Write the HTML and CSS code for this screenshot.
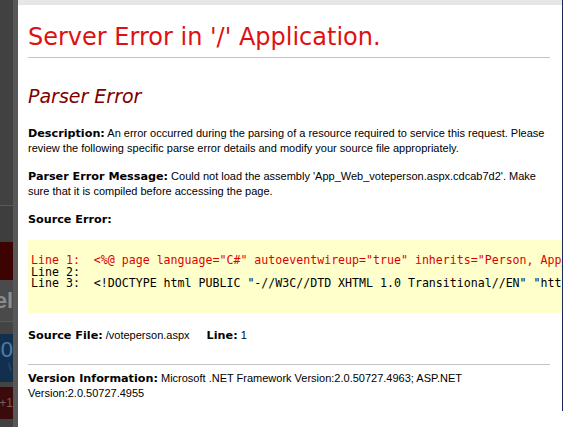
FILE: index.html
```html
<!DOCTYPE html>
<html lang="en">
<head>
    <meta charset="UTF-8">
    <title>Server Error in '/' Application.</title>
    <link rel="stylesheet" href="styles.css">
</head>
<body>
    <div class="backdrop">
        <div class="bd-space"></div>
        <div class="bd-rule"></div>
        <div class="bd-gap"></div>
        <div class="bd-red"></div>
        <div class="bd-label"><span>Panel</span></div>
        <div class="bd-rule"></div>
        <div class="bd-gap small"></div>
        <div class="bd-blue"><span>150</span><i>\</i></div>
        <div class="bd-gap tiny"></div>
        <div class="bd-plus"><span>+1</span></div>
    </div>
    <div class="dialog">
        <div class="dialog-frame">
            <div class="dialog-top"></div>
            <div class="error-page">
                <h1>Server Error in '/' Application.</h1>
                <hr>
                <h2><i>Parser Error</i></h2>
                <p><b>Description:</b> An error occurred during the parsing of a resource required to service this request. Please review the following specific parse error details and modify your source file appropriately.</p>
                <p><b>Parser Error Message:</b> Could not load the assembly 'App_Web_voteperson.aspx.cdcab7d2'. Make sure that it is compiled before accessing the page.</p>
                <p><b>Source Error:</b></p>
                <div class="source-box">
<pre><span class="err-line">Line 1:  &lt;%@ page language="C#" autoeventwireup="true" inherits="Person, App_Web_voteperson.aspx.cdcab7d2" %&gt;</span>
Line 2:  
Line 3:  &lt;!DOCTYPE html PUBLIC "-//W3C//DTD XHTML 1.0 Transitional//EN" "http://www.w3.org/TR/xhtml1/DTD/xhtml1-transitional.dtd"&gt;</pre>
                </div>
                <p class="source-file"><b>Source File:</b> /voteperson.aspx <b class="line-no">Line:</b> 1</p>
                <hr class="bottom-rule">
                <p class="version"><b>Version Information:</b> Microsoft .NET Framework Version:2.0.50727.4963; ASP.NET Version:2.0.50727.4955</p>
            </div>
        </div>
    </div>
</body>
</html>
```

FILE: styles.css
```css
html, body {
    margin: 0;
    padding: 0;
    height: 100%;
}
body {
    display: flex;
    background-color: #414141;
    overflow: hidden;
}
.backdrop {
    width: 13px;
    flex: none;
    display: flex;
    flex-direction: column;
    overflow: hidden;
    font-family: "Liberation Sans", Arial, sans-serif;
}
.bd-space {
    height: 205px;
}
.bd-rule {
    height: 1px;
    background-color: #5a5a5a;
}
.bd-gap {
    height: 36px;
    background-color: #3e3e3e;
}
.bd-gap.small {
    height: 12px;
    background-color: #444;
}
.bd-gap.tiny {
    height: 5px;
    background-color: #444;
}
.bd-red {
    height: 38px;
    background-color: #3d0202;
}
.bd-label {
    height: 41px;
    background-color: #4a4a4a;
    display: flex;
    justify-content: flex-end;
    align-items: center;
    color: #8c8c8c;
    font-weight: bold;
    font-size: 22px;
}
.bd-blue {
    height: 48px;
    background-color: #12304e;
    display: flex;
    flex-direction: column;
    align-items: flex-end;
    color: #4f7fa6;
    font-size: 22px;
    line-height: 24px;
    padding-top: 4px;
    box-sizing: border-box;
}
.bd-blue i {
    font-style: normal;
    font-size: 10px;
    line-height: 12px;
    color: #3a5a78;
    margin-right: 2px;
}
.bd-plus {
    height: 32px;
    background-color: #3b0a0a;
    display: flex;
    justify-content: flex-end;
    align-items: center;
    color: #7a5c5c;
    font-size: 12px;
}
.dialog {
    flex: 1;
    min-width: 0;
    border-left: 5px solid #585858;
    background-color: white;
}
.dialog-frame {
    height: 411px;
    margin-right: 1px;
    border-right: 1px solid #1b2a58;
    overflow: hidden;
}
.dialog-top {
    height: 5px;
    background-color: #e6e6e6;
}
.error-page {
    padding: 0 12px 0 10px;
    font-family: "Liberation Sans", Arial, sans-serif;
    font-size: 11px;
    line-height: 14px;
    color: black;
}
.error-page h1 {
    font-family: "DejaVu Sans", Verdana, sans-serif;
    font-weight: normal;
    font-size: 24px;
    line-height: 28px;
    color: #dd1111;
    margin: 18px 0 0;
}
.error-page hr {
    border: 0;
    border-top: 1px solid #c4c4c4;
    margin: 6px 0 0;
}
.error-page h2 {
    font-family: "DejaVu Sans", Verdana, sans-serif;
    font-weight: normal;
    font-size: 19px;
    line-height: 22px;
    color: #800000;
    margin: 27px 0 19px;
}
.error-page p {
    margin: 0 0 14px;
}
.error-page b {
    font-family: "DejaVu Sans", Verdana, sans-serif;
    font-size: 11.2px;
}
.source-box {
    width: 640px;
    background-color: #ffffcc;
    padding: 15px 3px 23px;
    margin-top: -1px;
}
.source-box pre {
    margin: 0;
    font-family: "DejaVu Sans Mono", monospace;
    font-size: 11.6px;
    line-height: 11.7px;
}
.err-line {
    color: #dd0000;
}
.error-page p.source-file {
    margin-top: 15px;
    margin-bottom: 0;
}
.line-no {
    margin-left: 14px;
}
.error-page hr.bottom-rule {
    margin: 21px 0 6px;
}
```
